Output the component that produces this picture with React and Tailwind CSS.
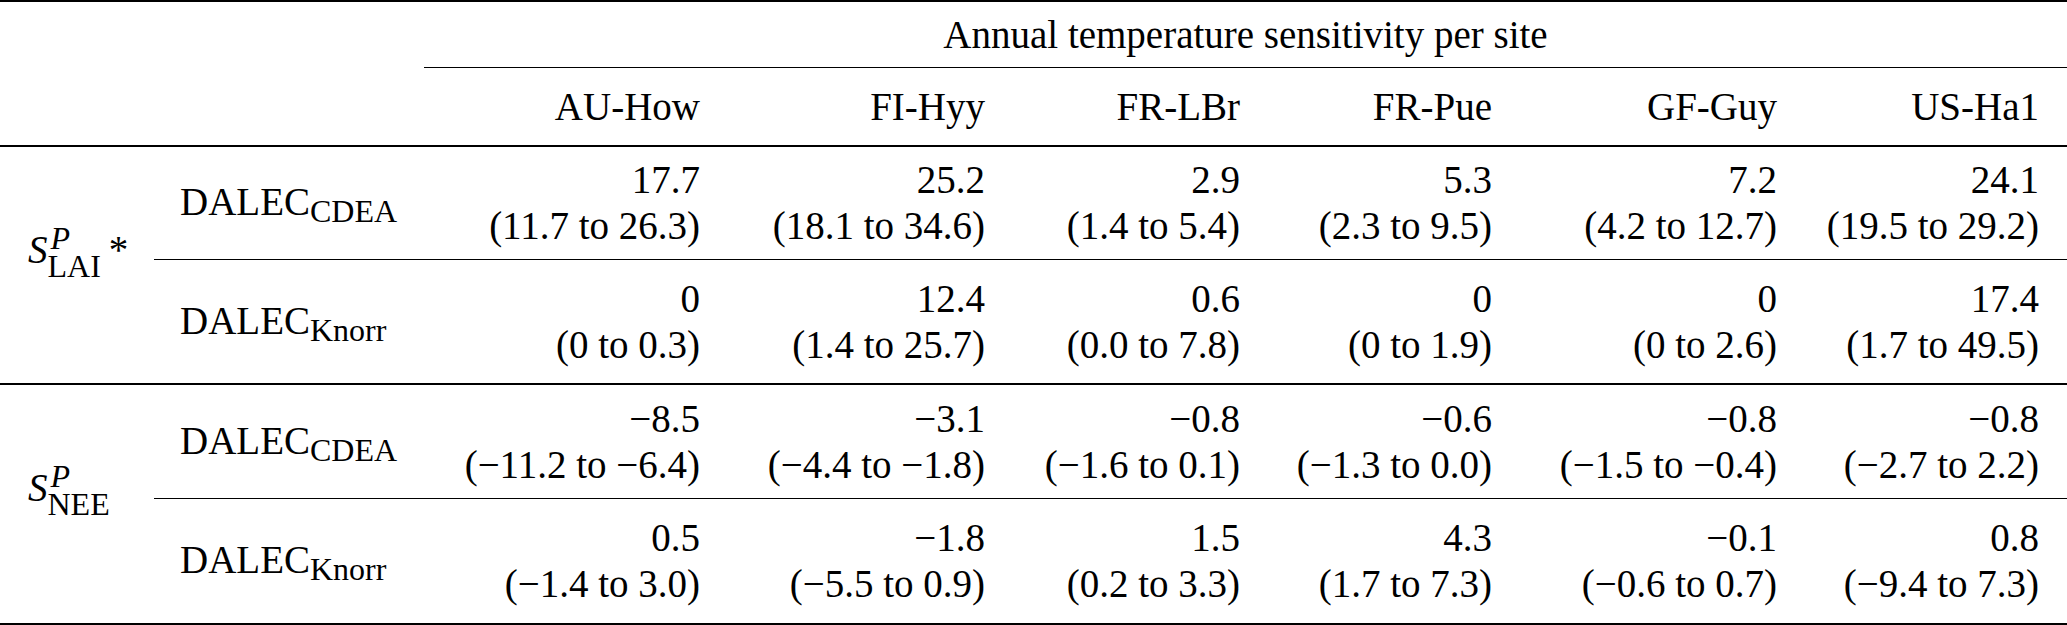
import React from 'react';

const sites = ['AU-How', 'FI-Hyy', 'FR-LBr', 'FR-Pue', 'GF-Guy', 'US-Ha1'];

const laiCdea = [
  ['17.7', '(11.7 to 26.3)'],
  ['25.2', '(18.1 to 34.6)'],
  ['2.9', '(1.4 to 5.4)'],
  ['5.3', '(2.3 to 9.5)'],
  ['7.2', '(4.2 to 12.7)'],
  ['24.1', '(19.5 to 29.2)'],
];
const laiKnorr = [
  ['0', '(0 to 0.3)'],
  ['12.4', '(1.4 to 25.7)'],
  ['0.6', '(0.0 to 7.8)'],
  ['0', '(0 to 1.9)'],
  ['0', '(0 to 2.6)'],
  ['17.4', '(1.7 to 49.5)'],
];
const neeCdea = [
  ['\u22128.5', '(\u221211.2 to \u22126.4)'],
  ['\u22123.1', '(\u22124.4 to \u22121.8)'],
  ['\u22120.8', '(\u22121.6 to 0.1)'],
  ['\u22120.6', '(\u22121.3 to 0.0)'],
  ['\u22120.8', '(\u22121.5 to \u22120.4)'],
  ['\u22120.8', '(\u22122.7 to 2.2)'],
];
const neeKnorr = [
  ['0.5', '(\u22121.4 to 3.0)'],
  ['\u22121.8', '(\u22125.5 to 0.9)'],
  ['1.5', '(0.2 to 3.3)'],
  ['4.3', '(1.7 to 7.3)'],
  ['\u22120.1', '(\u22120.6 to 0.7)'],
  ['0.8', '(\u22129.4 to 7.3)'],
];

function Model({ sub, className }) {
  return (
    <div className={`flex items-center pl-[26px] whitespace-nowrap ${className}`}>
      <span>
        DALEC
        <span className="text-[32px] leading-none align-[-7px]">{sub}</span>
      </span>
    </div>
  );
}

function Values({ pairs, className }) {
  return pairs.map(([value, range], i) => (
    <div key={i} className={`flex flex-col justify-center items-end pr-[28px] whitespace-nowrap ${className}`}>
      <div>{value}</div>
      <div>{range}</div>
    </div>
  ));
}

function Sensitivity({ sub, star, className }) {
  return (
    <div className={`row-span-2 pl-[28px] whitespace-nowrap ${className}`}>
      <span className="italic">S</span>
      <span className="inline-flex flex-col text-[32px] leading-[28px] align-[14px]">
        <span className="italic pl-[3px]">P</span>
        <span>{sub}</span>
      </span>
      {star && <span className="ml-[8px]">*</span>}
    </div>
  );
}

export default function App() {
  return (
    <div className="bg-white text-black font-['Liberation_Serif','Times_New_Roman',serif] text-[39px] leading-[46px]">
      <div className="grid grid-cols-[154px_270px_304px_285px_255px_252px_285px_262px] grid-rows-[66px_79px_113px_125px_114px_124px] border-y-2 border-black">
        {/* spanning title */}
        <div className="col-span-2" />
        <div className="col-span-6 flex items-center justify-center border-b border-black whitespace-nowrap">
          Annual temperature sensitivity per site
        </div>

        {/* site names */}
        <div className="col-span-2 border-b-2 border-black" />
        {sites.map((site) => (
          <div key={site} className="flex items-center justify-end border-b-2 border-black pr-[28px]">
            {site}
          </div>
        ))}

        {/* LAI */}
        <Sensitivity sub="LAI" star className="border-b-2 border-black pt-[77px]" />
        <Model sub="CDEA" className="border-b border-black" />
        <Values pairs={laiCdea} className="border-b border-black" />
        <Model sub="Knorr" className="border-b-2 border-black" />
        <Values pairs={laiKnorr} className="border-b-2 border-black" />

        {/* NEE */}
        <Sensitivity sub="NEE" className="pt-[77px]" />
        <Model sub="CDEA" className="border-b border-black" />
        <Values pairs={neeCdea} className="border-b border-black" />
        <Model sub="Knorr" />
        <Values pairs={neeKnorr} />
      </div>
    </div>
  );
}
